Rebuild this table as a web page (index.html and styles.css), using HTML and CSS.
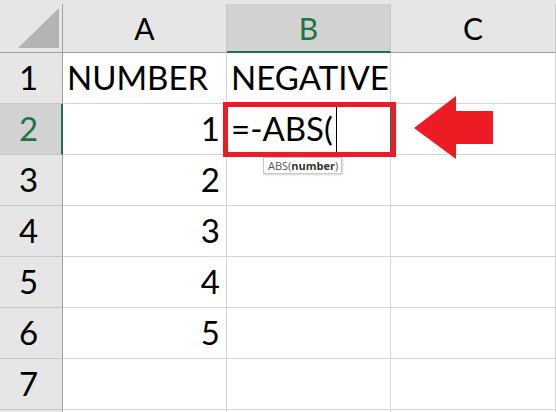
FILE: index.html
```html
<!DOCTYPE html>
<html>
<head>
<meta charset="utf-8">
<link rel="stylesheet" href="styles.css">
</head>
<body>
<div class="sheet">
  <div class="corner"><svg width="62" height="48" viewBox="0 0 62 48"><polygon points="18,44 59,44 59,4" fill="#b4b4b4"/></svg></div>
  <div class="colhead">A</div>
  <div class="colhead sel">B</div>
  <div class="colhead">C</div>

  <div class="rowhead">1</div>
  <div class="cell">NUMBER</div>
  <div class="cell">NEGATIVE</div>
  <div class="cell"></div>

  <div class="rowhead sel">2</div>
  <div class="cell num">1</div>
  <div class="cell edit"><span class="val">=-ABS(</span><span class="caret"></span></div>
  <div class="cell"></div>

  <div class="rowhead">3</div>
  <div class="cell num">2</div>
  <div class="cell"></div>
  <div class="cell"></div>

  <div class="rowhead">4</div>
  <div class="cell num">3</div>
  <div class="cell"></div>
  <div class="cell"></div>

  <div class="rowhead">5</div>
  <div class="cell num">4</div>
  <div class="cell"></div>
  <div class="cell"></div>

  <div class="rowhead">6</div>
  <div class="cell num">5</div>
  <div class="cell"></div>
  <div class="cell"></div>

  <div class="rowhead">7</div>
  <div class="cell"></div>
  <div class="cell"></div>
  <div class="cell"></div>

  <div class="rowhead"></div>
  <div class="cell"></div>
  <div class="cell"></div>
  <div class="cell"></div>

  <div class="highlight"></div>
  <div class="tooltip">ABS(<b>number</b>)</div>
  <svg class="arrow" width="80" height="64" viewBox="0 0 80 64"><polygon points="0,32 42,0 42,15 79,15 79,48 42,48 42,63" fill="#ed1c24"/></svg>
</div>
</body>
</html>
```

FILE: styles.css
```css
html, body {
  margin: 0;
  padding: 0;
  background: #ffffff;
  overflow: hidden;
}

.sheet {
  position: relative;
  display: grid;
  grid-template-columns: 63px 164px 164px 165px;
  grid-template-rows: 49px repeat(8, 51px);
  padding-top: 4px;
  height: 412px;
  box-sizing: border-box;
  overflow: hidden;
  background: #e6e6e6;
  font-family: "Lato", "Carlito", sans-serif;
  color: #000;
}

.sheet > div {
  box-sizing: border-box;
}

.corner {
  border-right: 1px solid #a0a0a0;
  border-bottom: 1px solid #a0a0a0;
  background: #e6e6e6;
}

.corner svg {
  display: block;
}

.colhead {
  display: flex;
  justify-content: center;
  align-items: flex-end;
  padding-bottom: 6px;
  font-size: 30px;
  line-height: 36px;
  background: #e6e6e6;
  border-right: 1px solid #c6c6c6;
  border-bottom: 1px solid #a0a0a0;
}

.colhead.sel {
  background: #d2d2d2;
  color: #217346;
  border-bottom: 2px solid #217346;
  padding-bottom: 5px;
}

.rowhead {
  display: flex;
  justify-content: center;
  align-items: flex-end;
  padding: 0 5px 6px 0;
  font-size: 33px;
  line-height: 40px;
  background: #e6e6e6;
  border-right: 1px solid #a0a0a0;
  border-bottom: 1px solid #c6c6c6;
}

.rowhead.sel {
  background: #d2d2d2;
  color: #217346;
  border-right: 2px solid #217346;
  padding-right: 4px;
}

.cell {
  display: flex;
  align-items: flex-end;
  padding: 0 4px 6px 4px;
  font-size: 33px;
  line-height: 40px;
  white-space: nowrap;
  background: #ffffff;
  border-right: 1px solid #d4d4d4;
  border-bottom: 1px solid #d4d4d4;
  overflow: visible;
}

.cell.num {
  justify-content: flex-end;
  padding-right: 6px;
}

.cell.edit {
  padding-bottom: 0;
  border-right-color: #217346;
}

.cell.edit .val {
  padding-bottom: 6px;
}

.cell.edit .caret {
  display: block;
  width: 1px;
  height: 45px;
  margin: 0 0 2px 3px;
  background: #000;
}

.highlight {
  position: absolute;
  left: 223px;
  top: 102px;
  width: 173px;
  height: 55px;
  box-sizing: border-box;
  border: 5px solid #ed1c24;
}

.tooltip {
  position: absolute;
  left: 263px;
  top: 157px;
  width: 79px;
  height: 17px;
  box-sizing: border-box;
  padding: 0 0 0 4px;
  background: #ffffff;
  border: 1px solid #c8c8c8;
  box-shadow: 1px 1px 2px rgba(0, 0, 0, 0.18);
  font-family: "Open Sans", "Noto Sans", sans-serif;
  font-size: 11px;
  line-height: 15px;
  color: #555;
  white-space: nowrap;
  overflow: hidden;
}

.tooltip b {
  color: #333;
  font-weight: 700;
}

.arrow {
  position: absolute;
  left: 414px;
  top: 96px;
  display: block;
}
```
